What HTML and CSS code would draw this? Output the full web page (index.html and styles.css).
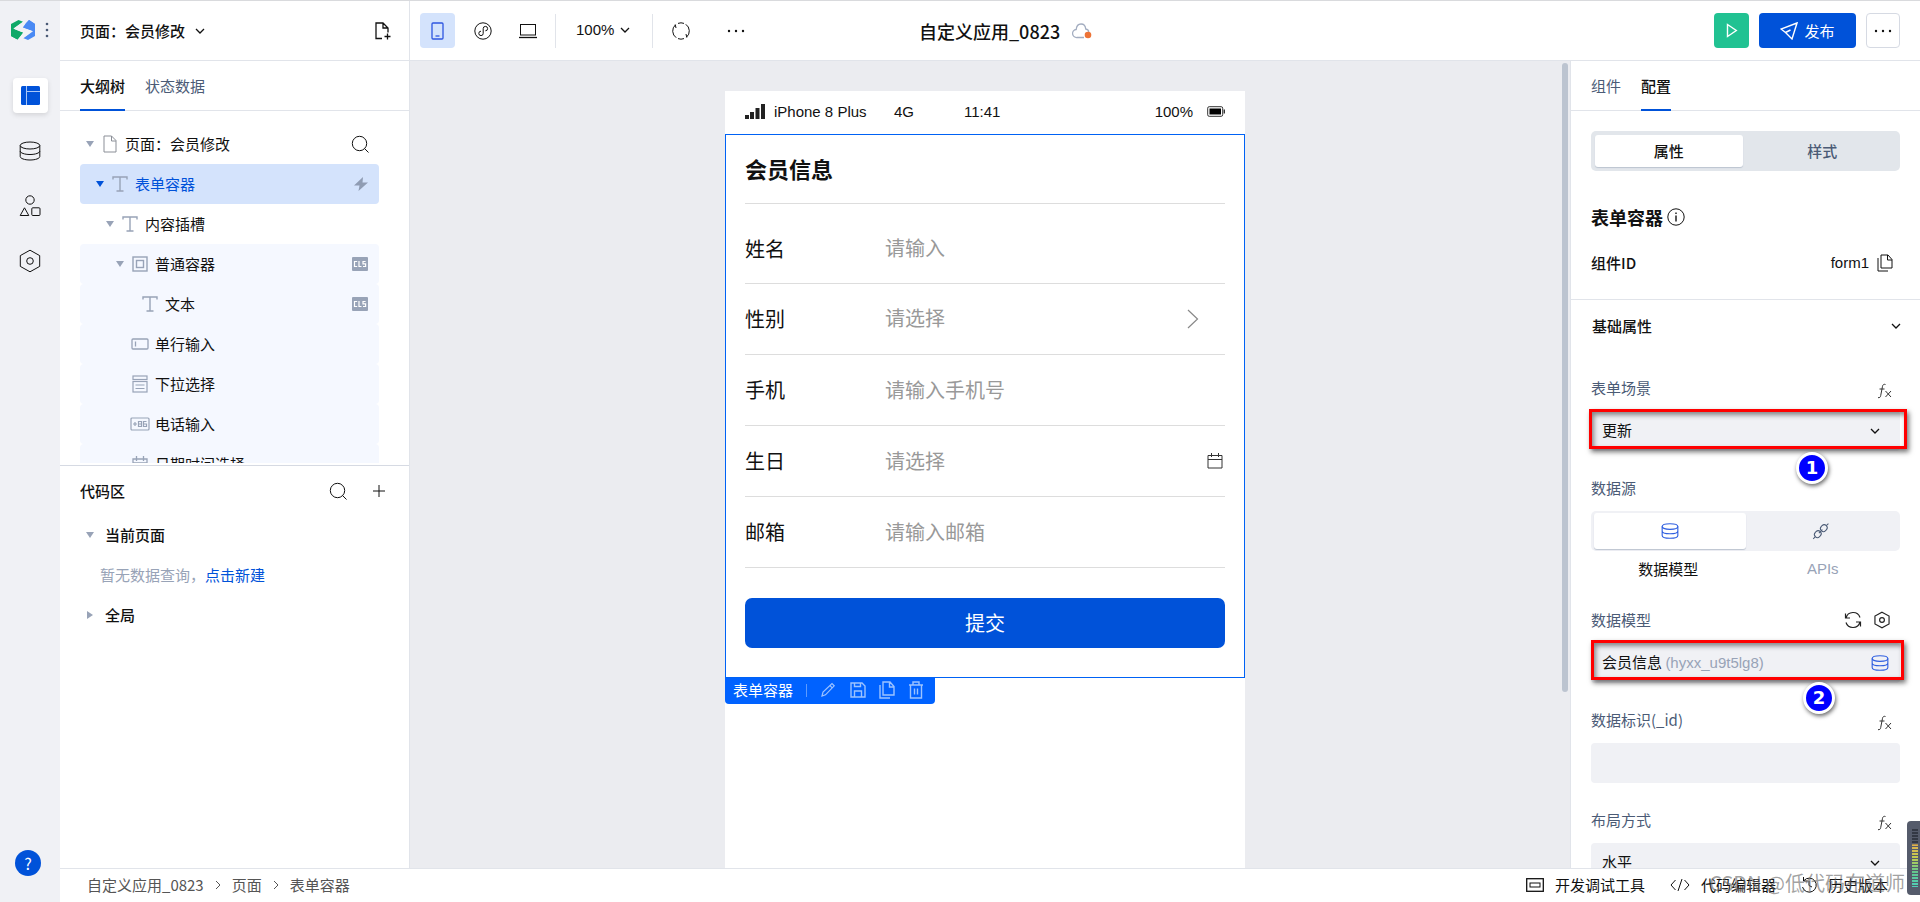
FILE: index.html
```html
<!DOCTYPE html>
<html lang="zh-CN">
<head>
<meta charset="utf-8">
<title>自定义应用_0823</title>
<link rel="stylesheet" href="styles.css">
</head>
<body>
<svg class="defs" aria-hidden="true">
  <symbol id="chev" viewBox="0 0 10 10"><path d="M1 3l4 4 4-4"/></symbol>
  <symbol id="text" viewBox="0 0 16 16"><path d="M1 3.500V1h14v2.500M8 1v14M4.500 15h7" stroke-width="1.400"/></symbol>
  <symbol id="search" viewBox="0 0 18 18"><circle cx="8.500" cy="8.500" r="7.200"/><path d="M13.500 13.500L17.500 17.500"/></symbol>
  <symbol id="db" viewBox="0 0 22 20"><ellipse cx="11" cy="4.500" rx="9.800" ry="3.500"/><path d="M1.200 4.500v11c0 1.900 4.200 3.500 9.800 3.500s9.800-1.600 9.800-3.500v-11M1.200 10c0 1.900 4.200 3.500 9.800 3.500s9.800-1.600 9.800-3.500"/></symbol>
  <symbol id="hex" viewBox="0 0 22 24"><path d="M11 1.200l9.700 5.400v10.800L11 22.800 1.300 17.400V6.600z"/><circle cx="11" cy="12" r="3.300"/></symbol>
  <symbol id="copy" viewBox="0 0 16 18"><path d="M4 1h7l4 4.500V14H4zM10.500 1v5H15M1 4v13h10"/></symbol>
  <symbol id="cls" viewBox="0 0 18 16"><rect x="1" y="1" width="16" height="14" rx="1" fill="#98a3b7" stroke="none"/><path d="M6.200 5.500H3.500v5h2.700M8 5v5.500h2.500M14.600 5.500H12v2.400h2.600v2.600H12" stroke="#fff" stroke-width="1.200"/></symbol>
  <symbol id="fx" viewBox="0 0 16 16"><path d="M8.500 1.500c-1.600-.6-2.700.2-3 1.800L3.700 12.600C3.400 14.300 2.500 15 1 14.600M2.500 6h5M8.500 8l5.500 6M14 8l-5.500 6"/></symbol>
  <symbol id="sync" viewBox="0 0 18 18"><path d="M2 7A7.300 7.300 0 0 1 16 6.500M16 11A7.300 7.300 0 0 1 2 11.500M1.500 2.500V7H6M16.500 15.500V11H12"/></symbol>
</svg>
<div class="app">
  <nav class="rail">
    <div class="brand">
      <svg width="24" height="20" viewBox="0 0 24 20" stroke="none"><path d="M0 4L7.500 0 12 1.800 2.500 8.500 12 12.500 6.500 19.500 0 16z" fill="#0fa968"/><path d="M24 4L18 0 12 7.500 21.500 11 12 18l5 2 7-4z" fill="#4a8af4"/><path d="M2.500 8.800L12 2v5.500l10 3.700L12 18.500v-6z" fill="#f0f1f5"/><path d="M12 7.500l3-4.500 3-3 6 4v7.500L18 9.500z" fill="#4a8af4"/><path d="M0 9.500l8 3 4 0L6.500 19.500 0 16z" fill="#0fa968"/></svg>
      <button class="plain" aria-label="菜单"><svg width="4" height="16" viewBox="0 0 4 16" fill="#4b5b76" stroke="none"><circle cx="2" cy="2" r="1.300"/><circle cx="2" cy="8" r="1.300"/><circle cx="2" cy="14" r="1.300"/></svg></button>
    </div>
    <button class="rail-btn active" aria-label="页面"><svg width="19" height="19" viewBox="0 0 19 19" stroke="none" fill="#0052d9"><rect width="19" height="19" rx="1.500"/><path d="M5.500 0v19M5.500 5.500H19" stroke="#a9c6f6"/></svg></button>
    <button class="rail-btn" aria-label="数据"><svg width="22" height="20"><use href="#db"/></svg></button>
    <button class="rail-btn" aria-label="组件"><svg width="22" height="22" viewBox="0 0 22 22"><circle cx="11" cy="5" r="4.200"/><path d="M5.500 12.800L9.800 20.500H1.200z"/><rect x="12.800" y="12.800" width="8.200" height="7.700" rx="1"/></svg></button>
    <button class="rail-btn" aria-label="设置"><svg width="22" height="24"><use href="#hex"/></svg></button>
    <button class="help" aria-label="帮助">?</button>
  </nav>
  <div class="main">
    <header class="topbar">
      <div class="page-pick">
        <button class="plain page-name">页面：会员修改 <svg width="10" height="10" stroke-width="1.300"><use href="#chev"/></svg></button>
        <button class="plain" aria-label="新建页面"><svg width="16" height="18" viewBox="0 0 16 18"><path d="M7 16.500H1V1h7l5 5v4.500M8 1v5h5M12.500 11.500v6M9.500 14.500h6" stroke-width="1.300"/></svg></button>
      </div>
      <div class="tools">
        <button class="tool on" aria-label="手机"><svg width="13" height="18" viewBox="0 0 13 18" stroke="#2f57e0" stroke-width="1.300"><rect x="1" y="1" width="11" height="16" rx="1"/><path d="M4.500 14h4"/></svg></button>
        <button class="tool" aria-label="小程序"><svg width="18" height="18" viewBox="0 0 18 18"><circle cx="9" cy="9" r="8.200"/><path d="M7 9.200a2.200 2.200 0 1 0 2.200 2.200V6.600A2.200 2.200 0 1 1 11.400 8.800"/></svg></button>
        <button class="tool" aria-label="电脑"><svg width="18" height="16" viewBox="0 0 18 16"><rect x="1.500" y="1.500" width="15" height="10.500"/><path d="M0 14.500h18" stroke-width="1.300"/></svg></button>
        <span class="bar"></span>
        <button class="plain zoom">100% <svg width="10" height="10" stroke-width="1.300"><use href="#chev"/></svg></button>
        <span class="bar"></span>
        <button class="tool" aria-label="刷新"><svg width="18" height="18" viewBox="0 0 18 18"><path d="M4.200 15.700A8.200 8.200 0 0 1 3.500 2.800M13.800 2.300A8.200 8.200 0 0 1 14.500 15.200M6 1.400A8.200 8.200 0 0 1 12 1.400M12 16.600A8.200 8.200 0 0 1 6 16.600M3.200 2.500L4 6M14.800 15.500L14 12"/></svg></button>
        <button class="tool" aria-label="更多"><svg width="18" height="4" viewBox="0 0 18 4" fill="#111" stroke="none"><circle cx="2" cy="2" r="1.200"/><circle cx="9" cy="2" r="1.200"/><circle cx="16" cy="2" r="1.200"/></svg></button>
      </div>
      <h1 class="app-title">自定义应用_0823 <svg width="20" height="16" viewBox="0 0 20 16"><path d="M12 14.500H5a4 4 0 0 1-.8-8C4.500 3 6.500 1 9 1s4.500 2 4.700 5c2 .3 3 1.600 3 3" stroke="#a3adc0" stroke-width="1.300"/><circle cx="16" cy="12" r="3.300" fill="#ed7336" stroke="none"/></svg></h1>
      <div class="actions">
        <button class="run" aria-label="运行"><svg width="12" height="15" viewBox="0 0 12 15" stroke="#fff" stroke-width="1.400"><path d="M1.500 1.500v12l8.800-6z"/></svg></button>
        <button class="publish"><svg width="18" height="18" viewBox="0 0 18 18" stroke="#fff" stroke-width="1.400"><path d="M17 1L1 7l4.500 3.500L12 17zM5.500 10.500L10.500 8"/></svg>发布</button>
        <button class="more" aria-label="更多操作"><svg width="18" height="4" viewBox="0 0 18 4" fill="#111" stroke="none"><circle cx="2" cy="2" r="1.200"/><circle cx="9" cy="2" r="1.200"/><circle cx="16" cy="2" r="1.200"/></svg></button>
      </div>
    </header>

    <div class="work">
      <aside class="left">
        <div class="tabs"><button class="tab on">大纲树</button><button class="tab">状态数据</button></div>
        <ul class="tree">
          <li class="row"><i class="caret"></i><span class="ic"><svg width="14" height="18" viewBox="0 0 14 18" stroke="#8b8f97"><path d="M1 1h7.500L13 5.500V17H1zM8.500 1v5H13"/></svg></span><span class="name">页面：会员修改</span><button class="plain" aria-label="搜索"><svg width="18" height="18"><use href="#search"/></svg></button></li>
          <li class="row d1 picked"><i class="caret"></i><span class="ic"><svg width="16" height="16"><use href="#text"/></svg></span><span class="name">表单容器</span><svg width="16" height="16" viewBox="0 0 16 16" fill="#8f9cb3" stroke="none"><path d="M10 1L1 9.500h5.500L5.500 15 15 6.500H9.500z"/></svg></li>
          <li class="row d2"><i class="caret"></i><span class="ic"><svg width="16" height="16"><use href="#text"/></svg></span><span class="name">内容插槽</span></li>
          <li class="row d3 tint"><i class="caret"></i><span class="ic"><svg width="16" height="16" viewBox="0 0 16 16" stroke-width="1.400"><rect x="1" y="1" width="14" height="14"/><rect x="4.500" y="4.500" width="7" height="7"/></svg></span><span class="name">普通容器</span><svg width="18" height="16"><use href="#cls"/></svg></li>
          <li class="row d4 tint"><i class="caret none"></i><span class="ic"><svg width="16" height="16"><use href="#text"/></svg></span><span class="name">文本</span><svg width="18" height="16"><use href="#cls"/></svg></li>
          <li class="row d3 tint"><i class="caret none"></i><span class="ic"><svg width="18" height="12" viewBox="0 0 18 12" stroke-width="1.300"><rect x="1" y="1" width="16" height="10" rx="1"/><path d="M4.500 3.500v5"/></svg></span><span class="name">单行输入</span></li>
          <li class="row d3 tint"><i class="caret none"></i><span class="ic"><svg width="16" height="18" viewBox="0 0 16 18" stroke-width="1.200"><rect x="1" y="1" width="14" height="3.500"/><rect x="1" y="6.500" width="14" height="10.500"/><path d="M3.500 10h9M3.500 13.500h9"/></svg></span><span class="name">下拉选择</span></li>
          <li class="row d3 tint"><i class="caret none"></i><span class="ic"><svg width="20" height="14" viewBox="0 0 20 14" stroke-width="1.200"><rect x="1" y="1" width="18" height="12" rx="1"/><path d="M3 7h4M5 5v4M8.500 4.500h3v5h-3zM8.500 7h3M16.500 4.500h-3v5h3V7h-3"/></svg></span><span class="name">电话输入</span></li>
          <li class="row d3 tint"><i class="caret none"></i><span class="ic"><svg width="16" height="16" viewBox="0 0 16 16" stroke-width="1.300"><path d="M1 3h14v12H1zM1 7h14M4.500 0v5M11.500 0v5"/></svg></span><span class="name">日期时间选择</span></li>
        </ul>
        <section class="code">
          <div class="code-head"><h2>代码区</h2><button class="plain" aria-label="搜索代码"><svg width="18" height="18"><use href="#search"/></svg></button><button class="plain" aria-label="新增"><svg width="12" height="12" viewBox="0 0 12 12"><path d="M6 0v12M0 6h12"/></svg></button></div>
          <div class="code-row"><i class="caret"></i>当前页面</div>
          <p class="empty">暂无数据查询，<a href="#new">点击新建</a></p>
          <div class="code-row"><i class="caret side"></i>全局</div>
        </section>
      </aside>

      <main class="canvas">
        <div class="phone">
          <div class="status">
            <svg width="20" height="15" viewBox="0 0 20 15" fill="#222" stroke="none"><path d="M0 11h4v4H0zM5 8h4v7H5zM10.500 4h4v11h-4zM16 0h4v15h-4z"/></svg>
            <span class="model">iPhone 8 Plus</span><span class="net">4G</span><span class="time">11:41</span><span class="pct">100%</span>
            <svg width="18" height="11" viewBox="0 0 18 11" stroke="#333"><rect x=".7" y=".7" width="15" height="9.600" rx="1.500"/><rect x="2.500" y="2.500" width="11.500" height="6" fill="#000" stroke="none"/><path d="M17.300 3.500v4" stroke-width="1.400"/></svg>
          </div>
          <form class="form">
            <h2 class="form-title">会员信息</h2>
            <div class="item first"><label for="f1">姓名</label><input id="f1" placeholder="请输入"></div>
            <div class="item"><label for="f2">性别</label><select id="f2"><option>请选择</option></select><svg class="arrow" width="12" height="20" viewBox="0 0 12 20" stroke="#888" stroke-width="1.200"><path d="M1 1l9.500 9L1 19"/></svg></div>
            <div class="item"><label for="f3">手机</label><input id="f3" placeholder="请输入手机号"></div>
            <div class="item"><label for="f4">生日</label><input id="f4" placeholder="请选择"><svg class="cal" width="16" height="16" viewBox="0 0 16 16" stroke="#333"><path d="M1 2.500h14v12.500H1zM1 6.500h14M4.500 0v4M11.500 0v4"/></svg></div>
            <div class="item"><label for="f5">邮箱</label><input id="f5" placeholder="请输入邮箱"></div>
            <button type="button" class="submit">提交</button>
          </form>
          <div class="node-bar">
            <span>表单容器</span><i></i>
            <button class="plain" aria-label="编辑"><svg width="16" height="16" viewBox="0 0 16 16" stroke-width="1.200"><path d="M2 14l1-4 9-8.500 2.200 2.300L5.500 12.800zM10 3.500l2.200 2.300"/></svg></button>
            <button class="plain" aria-label="保存"><svg width="16" height="16" viewBox="0 0 16 16" stroke-width="1.400"><path d="M1 1h11l3 3v11H1zM4.500 1v3.500h6V1M4.500 15V9h7v6"/></svg></button>
            <button class="plain" aria-label="复制"><svg width="16" height="18" stroke-width="1.400"><use href="#copy"/></svg></button>
            <button class="plain" aria-label="删除"><svg width="16" height="18" viewBox="0 0 16 18" stroke-width="1.400"><path d="M1 4h14M5 4V1h6v3M2.500 4v13h11V4M6.500 7.500v6M9.500 7.500v6"/></svg></button>
          </div>
        </div>
        <div class="scroll"></div>
      </main>

      <aside class="right">
        <div class="tabs"><button class="tab">组件</button><button class="tab on">配置</button></div>
        <div class="props">
          <div class="seg"><button class="on">属性</button><button>样式</button></div>
          <h2 class="comp">表单容器 <svg width="18" height="18" viewBox="0 0 18 18"><circle cx="9" cy="9" r="8.200"/><path d="M9 7.500v6M9 4.500v1.500" stroke-width="1.400"/></svg></h2>
          <div class="idrow"><b>组件ID</b><span>form1</span><button class="plain" aria-label="复制ID"><svg width="16" height="18"><use href="#copy"/></svg></button></div>
          <h3 class="sect">基础属性 <svg width="10" height="10" stroke-width="1.300"><use href="#chev"/></svg></h3>
          <div class="field">
            <div class="flabel"><label for="p1">表单场景</label><button class="plain fx" aria-label="表达式"><svg width="16" height="16"><use href="#fx"/></svg></button></div>
            <div class="ctl"><select id="p1"><option>更新</option></select><svg class="dd" width="10" height="10" stroke-width="1.300"><use href="#chev"/></svg><div class="mark one"></div><span class="num n1">1</span></div>
          </div>
          <div class="field">
            <div class="flabel"><span>数据源</span></div>
            <div class="seg small"><button class="on" aria-label="数据模型"><svg width="18" height="16" stroke="#2f5fe0" stroke-width="1.400"><use href="#db"/></svg></button><button aria-label="APIs"><svg width="18" height="18" viewBox="0 0 18 18"><g transform="rotate(-45 9 9)"><rect x="1" y="6" width="7" height="6" rx="3"/><rect x="9.500" y="6" width="7" height="6" rx="3"/><path d="M-2 9h3M6 9h5M16.500 9h3"/></g></svg></button></div>
            <div class="caps"><span>数据模型</span><span>APIs</span></div>
          </div>
          <div class="field">
            <div class="flabel"><span>数据模型</span><div class="pair"><button class="plain" aria-label="刷新模型"><svg width="18" height="18" stroke-width="1.200"><use href="#sync"/></svg></button><button class="plain" aria-label="模型设置"><svg width="16" height="18" stroke-width="1.600"><use href="#hex"/></svg></button></div></div>
            <div class="ctl"><button class="model-pick">会员信息 <em>(hyxx_u9t5lg8)</em></button><svg class="dd-db" width="18" height="16" stroke-width="1.400"><use href="#db"/></svg><div class="mark two"></div><span class="num n2">2</span></div>
          </div>
          <div class="field">
            <div class="flabel"><label for="p3">数据标识(_id)</label><button class="plain fx" aria-label="表达式"><svg width="16" height="16"><use href="#fx"/></svg></button></div>
            <div class="ctl"><input id="p3"></div>
          </div>
          <div class="field">
            <div class="flabel"><label for="p4">布局方式</label><button class="plain fx" aria-label="表达式"><svg width="16" height="16"><use href="#fx"/></svg></button></div>
            <div class="ctl"><select id="p4"><option>水平</option></select><svg class="dd" width="10" height="10" stroke-width="1.300"><use href="#chev"/></svg></div>
          </div>
        </div>
      </aside>
    </div>

    <footer class="foot">
      <div class="crumbs"><a href="#app">自定义应用_0823</a><svg width="6" height="10" viewBox="0 0 6 10"><path d="M1 1l4 4-4 4"/></svg><a href="#page">页面</a><svg width="6" height="10" viewBox="0 0 6 10"><path d="M1 1l4 4-4 4"/></svg><a href="#form">表单容器</a></div>
      <div class="links">
        <button class="plain"><svg width="18" height="14" viewBox="0 0 18 14"><rect x=".7" y=".7" width="16.600" height="12.600" stroke-width="1.300"/><rect x="4" y="5" width="10" height="4"/></svg>开发调试工具</button>
        <button class="plain"><svg width="20" height="12" viewBox="0 0 20 12"><path d="M5.500 1L1 6l4.500 5M14.500 1L19 6l-4.500 5M12 0L8 12"/></svg>代码编辑器</button>
        <button class="plain"><svg width="16" height="16" viewBox="0 0 16 16"><path d="M3 3.500A7 7 0 1 1 1.500 10M2.500 0v4h4M8 4v4.500l3 1.500"/></svg>历史版本</button>
      </div>
    </footer>
  </div>
  <div class="watermark">CSDN @低代码布道师</div>
  <div class="meter"><i></i></div>
</div>
</body>
</html>
```
FILE: styles.css
```css
* { box-sizing: border-box; margin: 0; padding: 0; }
body { font: 15px/20px "Noto Sans CJK SC", sans-serif; color: #111; }
button, input, select { font: inherit; color: inherit; border: 0; background: none; appearance: none; outline: 0; }
ul { list-style: none; }
a { color: inherit; text-decoration: none; }
svg { flex: none; }
svg:not([fill]) { fill: none; }
svg:not([stroke]) { stroke: currentColor; }
.defs { position: absolute; width: 0; height: 0; }
.plain { display: flex; align-items: center; }

.app { position: relative; display: flex; height: 100vh; border-top: 1px solid #d9dadd; overflow: hidden; }
.rail { width: 60px; background: #f0f1f5; display: flex; flex-direction: column; align-items: center; gap: 20px; }
.brand { height: 57px; width: 100%; padding-left: 11px; display: flex; align-items: center; gap: 10px; }
.rail-btn { width: 35px; height: 35px; border-radius: 4px; display: flex; align-items: center; justify-content: center; }
.rail-btn.active { background: #fff; box-shadow: 0 2px 5px rgba(0, 0, 0, .12); }
.help { width: 26px; height: 26px; margin: auto 4px 26px 0; border-radius: 50%; background: #0052d9; color: #fff; font-size: 16px; }

.main { flex: 1; min-width: 0; display: flex; flex-direction: column; }
.topbar { position: relative; height: 60px; display: flex; align-items: center; border-bottom: 1px solid #e1e4ea; }
.page-pick { width: 350px; height: 100%; padding: 0 18px 0 20px; border-right: 1px solid #e1e4ea; display: flex; align-items: center; justify-content: space-between; }
.page-name { gap: 10px; font-weight: 500; }
.tools { display: flex; align-items: center; gap: 10px; padding-left: 10px; }
.tool { width: 35px; height: 35px; border-radius: 4px; display: flex; align-items: center; justify-content: center; }
.tool.on { background: #d4e3fc; }
.bar { width: 1px; height: 34px; background: #e1e4ea; }
.tools .zoom { gap: 6px; padding: 0 12px 2px 10px; font-family: "Liberation Sans", sans-serif; }
.tools .tool:last-child { margin-left: 10px; }
.app-title { position: absolute; left: 859px; display: flex; align-items: center; gap: 12px; font-size: 18px; line-height: 24px; font-weight: 500; }
.actions { margin-left: auto; padding-right: 20px; display: flex; gap: 10px; }
.actions button { height: 35px; border-radius: 4px; display: flex; align-items: center; justify-content: center; }
.run { width: 35px; background: #21c292; }
.actions .publish { width: 97px; gap: 6px; background: #0052d9; color: #fff; }
.actions .more { width: 34px; border: 1px solid #d6dae3; }

.work { flex: 1; min-height: 0; display: flex; }
.left { width: 350px; border-right: 1px solid #e1e4ea; display: flex; flex-direction: column; }
.tabs { height: 50px; flex: none; padding-left: 20px; display: flex; gap: 20px; border-bottom: 1px solid #e1e4ea; }
.tab { height: 50px; padding-top: 2px; color: #4b5b76; border-bottom: 2px solid transparent; }
.tab.on { color: #111; font-weight: 500; border-color: #0052d9; }
.tree { flex: 339 1 0; min-height: 0; overflow: hidden; padding: 13px 30px 0 20px; margin-bottom: 2px; }
.row { height: 40px; padding-right: 10px; border-radius: 4px; display: flex; align-items: center; }
.name { flex: 1; padding-left: 5px; }
.row .ic { width: 20px; display: flex; justify-content: center; color: #98a3b7; }
.d1 { padding-left: 10px; }
.d2 { padding-left: 20px; }
.d3 { padding-left: 30px; }
.d4 { padding-left: 40px; }
.picked { background: #d4e3fc; color: #0052d9; }
.tint { background: #f5f8ff; }
.caret { width: 20px; display: flex; justify-content: center; }
.caret::before { content: ""; border: 4px solid transparent; border-top: 6px solid #98a3b7; border-bottom: 0; }
.picked .caret::before { border-top-color: #0052d9; }
.caret.none::before { content: none; }
.caret.side::before { border: 4px solid transparent; border-left: 6px solid #98a3b7; border-right: 0; }
.code { flex: 402 1 0; border-top: 1px solid #d6dae3; padding: 0 24px 0 20px; }
.code-head { height: 49px; display: flex; align-items: center; gap: 26px; }
.code-head h2 { flex: 1; font-size: 15px; font-weight: 500; }
.code-row { height: 40px; display: flex; align-items: center; gap: 5px; font-weight: 500; }
.empty { line-height: 40px; padding-left: 20px; color: #98a3b7; }
.empty a { color: #0052d9; }

.canvas { flex: 1; min-width: 0; background: #ebecf0; display: flex; justify-content: center; position: relative; padding: 30px 10px 0 0; }
.phone { width: 520px; background: #fff; }
.status { height: 43px; padding: 0 20px 2px; display: flex; align-items: center; font: 15px/20px "Liberation Sans", sans-serif; }
.model { width: 129px; padding-left: 9px; }
.net { width: 70px; }
.time { flex: 1; }
.pct { padding-right: 14px; }
.form { border: 1px solid #0062f5; padding: 0 19px 29px; }
.form-title { height: 69px; border-bottom: 1px solid #ddd; font-size: 22px; line-height: 67px; font-weight: 700; }
.item { height: 71px; border-bottom: 1px solid #ddd; display: flex; align-items: center; font-size: 20px; }
.item.first { height: 80px; padding-top: 10px; }
.item label { width: 140px; }
.item input, .item select { flex: 1; min-width: 0; height: 40px; padding-bottom: 2px; color: #999; }
.item input::placeholder { color: #999; opacity: 1; }
.arrow { margin-right: 26px; }
.cal { margin-right: 2px; }
.submit { display: block; width: 100%; height: 50px; margin-top: 30px; border-radius: 7px; background: #0052d9; color: #fff; font-size: 20px; }
.node-bar { width: 210px; height: 26px; padding: 0 11px 2px 8px; display: flex; align-items: center; justify-content: space-between; background: #0062ff; color: #fff; border-radius: 0 0 4px 4px; }
.node-bar i { width: 1px; height: 13px; background: #5d9bff; }
.node-bar .plain { color: #9cc3ff; }
.scroll { position: absolute; right: 2px; top: 2px; width: 6px; height: 78%; border-radius: 3px; background: #bcc4d0; }

.right { width: 350px; border-left: 1px solid #e1e4ea; display: flex; flex-direction: column; overflow: hidden; }
.props { flex: 1; min-height: 0; overflow: hidden; padding: 20px 20px 0; }
.seg { height: 40px; padding: 4px; border-radius: 5px; background: #e2e6eb; display: flex; gap: 6px; color: #4b5b76; font-weight: 500; }
.seg button { flex: 1; border-radius: 3px; display: flex; align-items: center; justify-content: center; }
.seg .on { background: #fff; color: #111; box-shadow: 0 1px 1px #bcc4d0; }
.seg.small { background: #f0f1f5; padding: 2px 3px; gap: 0; }
.comp { margin-top: 31px; height: 30px; display: flex; align-items: center; gap: 4px; font-size: 18px; font-weight: 700; }
.idrow { margin-top: 16px; height: 30px; display: flex; align-items: center; gap: 8px; padding-right: 7px; }
.idrow b { flex: 1; font-weight: 500; }
.idrow span { font-family: "Liberation Sans", sans-serif; }
.sect { margin: 21px -20px 0; height: 52px; padding: 0 19px 0 21px; border-top: 1px solid #e1e4ea; display: flex; align-items: center; justify-content: space-between; font-size: 15px; font-weight: 500; }
.field { margin-top: 22px; }
.flabel { height: 30px; margin-bottom: 8px; padding-right: 7px; display: flex; align-items: center; justify-content: space-between; color: #4b5b76; }
.fx { padding-top: 6px; color: #333; }
.pair { display: flex; gap: 12px; padding-right: 3px; color: #222; }
.ctl { position: relative; height: 40px; }
.ctl select, .ctl input, .model-pick { width: 100%; height: 40px; padding: 0 11px 2px; border-radius: 4px; background: #f0f1f5; text-align: left; }
.model-pick em { font: 15px/20px "Liberation Sans", sans-serif; color: #98a3b7; }
.dd { position: absolute; right: 20px; top: 15px; }
.dd-db { position: absolute; right: 11px; top: 12px; color: #2f5fe0; }
.caps { display: flex; padding-top: 8px; margin-bottom: 26px; text-align: center; }
.caps span { flex: 1; }
.caps span + span { color: #98a3b7; font-family: "Liberation Sans", sans-serif; }
.mark { position: absolute; border: 3px solid #f00; box-shadow: 2px 3px 5px rgba(0, 0, 0, .55), inset 2px 3px 5px rgba(0, 0, 0, .45); pointer-events: none; }
.mark.one { inset: -2px -7px 2px -2px; }
.mark.two { inset: -3px -4px 3px 0; }
.num { position: absolute; z-index: 1; width: 32px; height: 32px; border: 3px solid #fff; border-radius: 50%; background: #00f; color: #fff; box-shadow: 1px 2px 4px rgba(0, 0, 0, .6); font: bold 18px/26px "DejaVu Sans", sans-serif; text-align: center; }
.n1 { left: 205px; top: 41px; }
.n2 { left: 212px; top: 39px; }

.foot { height: 34px; border-top: 1px solid #e1e4ea; padding: 0 32px 2px 27px; display: flex; align-items: center; justify-content: space-between; }
.crumbs { display: flex; align-items: center; gap: 11px; color: #555; }
.links { display: flex; gap: 25px; }
.links .plain { gap: 11px; }
.watermark { position: absolute; right: 15px; bottom: 5px; font-size: 20px; line-height: 28px; color: rgba(100, 100, 100, .6); pointer-events: none; }
.meter { position: absolute; right: 0; bottom: 7px; width: 13px; height: 74px; padding: 8px 2px 8px 5px; border-radius: 4px 0 0 4px; background: #555b6b; }
.meter i { display: block; height: 100%; background: repeating-linear-gradient(transparent 0 2px, #555b6b 2px 3px), linear-gradient(#333844 26%, #e0b050 27%, #c0cc50 50%, #60c890 75%, #50d0b8); }
```
